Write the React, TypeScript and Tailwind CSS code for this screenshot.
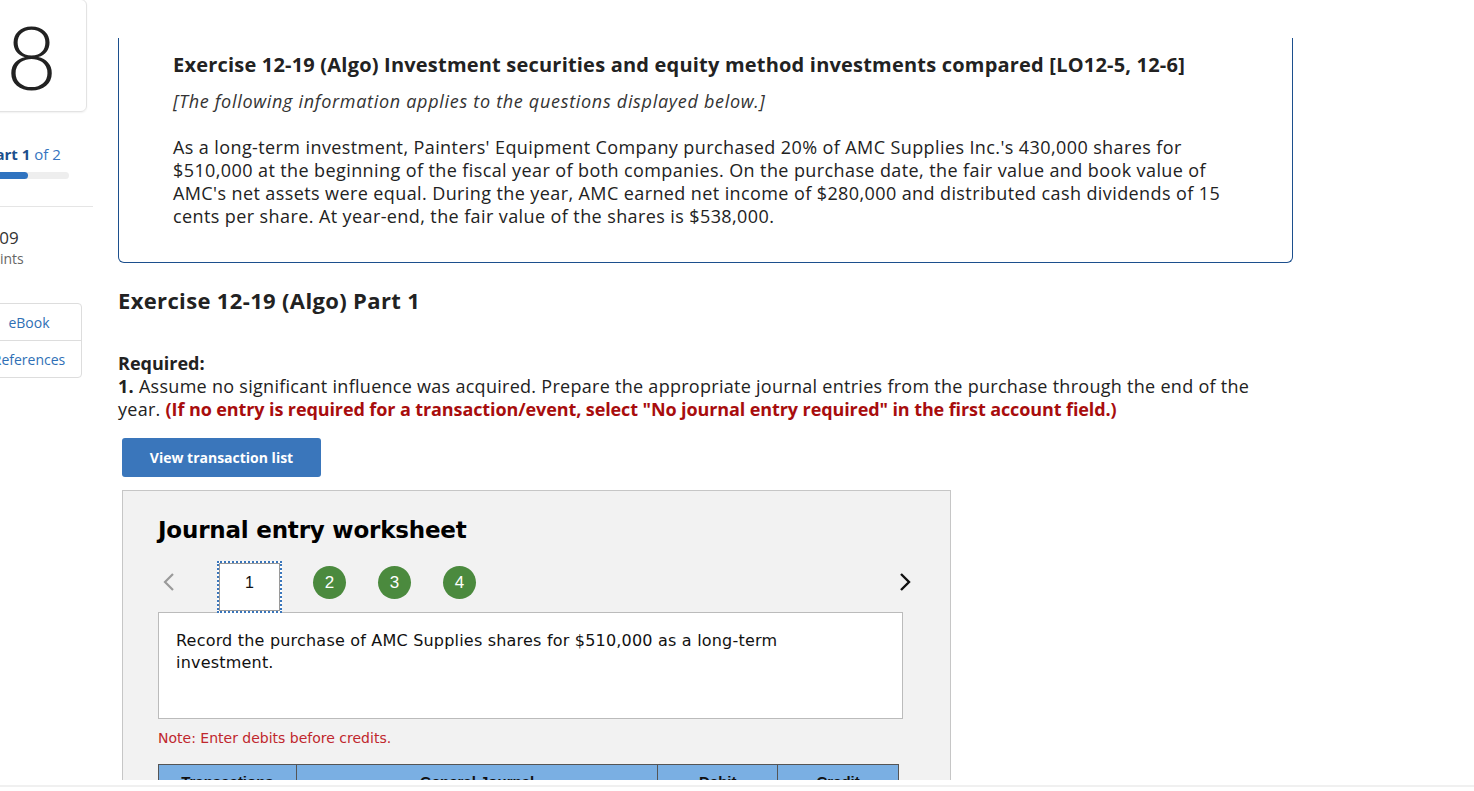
const sans = "font-['Open_Sans','Liberation_Sans',sans-serif]";
const verdana = "font-['DejaVu_Sans','Liberation_Sans',sans-serif]";

function Sidebar() {
  return (
    <aside className={`-ml-[24px] w-[142px] shrink-0 ${sans}`}>
      <div className="-mt-px flex h-[113px] w-[111px] items-center justify-center rounded-md border border-[#e3e3e3] shadow-[0_1px_2px_rgba(0,0,0,0.06)]">
        <span className="font-['Lato',sans-serif] text-[88px] font-light leading-none text-[#222]">8</span>
      </div>
      <p className="mt-[32px] pl-[10px] text-[15px] leading-[20px] text-[#3574bf]">
        <span className="font-bold text-[#1c4f8d]">Part 1</span> of 2
      </p>
      <div className="mt-[8px] h-[7px] w-[93px] rounded-full bg-[#eeeeee]">
        <div className="h-full w-[52px] rounded-full bg-[#2f73c0]" />
      </div>
      <div className="mt-[27px] w-[117px] border-t border-[#e5e5e5]" />
      <p className="mt-[20px] pl-[9px] text-[17px] leading-[22px] text-[#333]">1.09</p>
      <p className="mt-px pl-[7px] text-[14px] leading-[18px] text-[#666]">points</p>
      <div className="mt-[35px] w-[106px] rounded border border-[#dddddd] text-[14px] text-[#2f6fb5]">
        <div className="flex h-[37px] items-center justify-center border-b border-[#dddddd]">eBook</div>
        <div className="flex h-[36px] items-center justify-center">References</div>
      </div>
    </aside>
  );
}

function Pager() {
  return (
    <div className="flex h-[52px] items-start">
      <svg width="14" height="20" viewBox="0 0 14 20" className="ml-[4px] mt-[11px]">
        <path d="M11 2 L3 10 L11 18" fill="none" stroke="#9a9a9a" strokeWidth="2.2" />
      </svg>
      <div className="relative z-10 ml-[41px] flex h-[52px] w-[65px] justify-center border-2 border-dotted border-[#3a76bb] bg-white pt-[10px]">
        <div className="absolute inset-0 border border-[#9a9a9a]" />
        <span className="font-['Liberation_Sans',sans-serif] text-[16px] leading-[20px] text-[#111]">1</span>
      </div>
      {["2", "3", "4"].map((n, i) => (
        <span
          key={n}
          className={`${i === 0 ? "ml-[31px]" : "ml-[32px]"} mt-[5px] flex h-[33px] w-[33px] items-center justify-center rounded-full bg-[#4b8a3e] font-['Liberation_Sans',sans-serif] text-[17px] text-white`}
        >
          {n}
        </span>
      ))}
      <svg width="14" height="20" viewBox="0 0 14 20" className="ml-auto -mr-[9px] mt-[11px]">
        <path d="M3 2 L11 10 L3 18" fill="none" stroke="#111" strokeWidth="2.4" />
      </svg>
    </div>
  );
}

function Worksheet() {
  return (
    <section className="ml-[4px] mt-[13px] w-[829px] border border-[#c6c6c6] bg-[#f2f2f2] pl-[35px] pt-[24px] pb-[40px]">
      <h2 className={`${verdana} text-[23px] font-bold leading-[30px] tracking-[-0.2px] text-black`}>
        Journal entry worksheet
      </h2>
      <div className="mt-[16px] w-[745px]">
        <Pager />
      </div>
      <div className={`-mt-px h-[107px] w-[745px] border border-[#bbbbbb] bg-white pl-[17px] pt-[17px] ${verdana} text-[16px] leading-[22px] tracking-[0.2px] text-[#111]`}>
        Record the purchase of AMC Supplies shares for $510,000 as a long-term
        <br />
        investment.
      </div>
      <p className={`mt-[10px] ${verdana} text-[14px] leading-[18px] text-[#c0272d]`}>
        Note: Enter debits before credits.
      </p>
      <table className="mt-[17px] w-[741px] border-collapse font-['Liberation_Sans',sans-serif] text-[15px] font-bold text-[#111]">
        <thead>
          <tr className="bg-[#7aafe3]">
            <th className="w-[138px] border border-[#555] py-[6px]">Transactions</th>
            <th className="w-[362px] border border-[#555] py-[6px]">General Journal</th>
            <th className="w-[120px] border border-[#555] py-[6px]">Debit</th>
            <th className="w-[121px] border border-[#555] py-[6px]">Credit</th>
          </tr>
        </thead>
        <tbody>
          <tr className="bg-white">
            <td className="h-[36px] border border-[#999]" />
            <td className="border border-[#999]" />
            <td className="border border-[#999]" />
            <td className="border border-[#999]" />
          </tr>
        </tbody>
      </table>
    </section>
  );
}

export default function App() {
  return (
    <div className="flex h-[791px] w-full flex-col overflow-hidden bg-white">
      <div className="flex h-[780px] overflow-hidden">
        <Sidebar />
        <main className={`w-[1175px] shrink-0 ${sans} text-[#222]`}>
          <div className="mt-[38px] h-[225px] rounded-b-md border-x border-b border-[#1c4f8d] pl-[54px] pt-[14px]">
            <h1 className="text-[20px] font-bold leading-[26px] tracking-[0.2px] text-[#222]">
              Exercise 12-19 (Algo) Investment securities and equity method investments compared [LO12-5, 12-6]
            </h1>
            <p className="mt-[12px] text-[18px] italic leading-[23px] tracking-[0.7px] text-[#333]">
              [The following information applies to the questions displayed below.]
            </p>
            <p className="mt-[23px] text-[18px] leading-[23px] tracking-[0.4px] text-[#222]">
              As a long-term investment, Painters' Equipment Company purchased 20% of AMC Supplies Inc.'s 430,000 shares for
              <br />
              $510,000 at the beginning of the fiscal year of both companies. On the purchase date, the fair value and book value of
              <br />
              AMC's net assets were equal. During the year, AMC earned net income of $280,000 and distributed cash dividends of 15
              <br />
              cents per share. At year-end, the fair value of the shares is $538,000.
            </p>
          </div>
          <h2 className="mt-[23px] text-[22px] font-bold leading-[28px] tracking-[0.35px] text-[#222]">Exercise 12-19 (Algo) Part 1</h2>
          <p className="mt-[38px] text-[18px] font-bold leading-[23px]">Required:</p>
          <p className="text-[18px] leading-[23px] tracking-[0.28px]">
            <span className="font-bold">1.</span> Assume no significant influence was acquired. Prepare the appropriate journal entries from the purchase through the end of the
            <br />
            year.{" "}
            <span className="font-bold tracking-[-0.1px] text-[#a80d0d]">
              (If no entry is required for a transaction/event, select "No journal entry required" in the first account field.)
            </span>
          </p>
          <button
            type="button"
            className="ml-[4px] mt-[17px] h-[39px] w-[199px] rounded-[3px] bg-[#3a76bb] text-[14px] font-bold text-white"
          >
            View transaction list
          </button>
          <Worksheet />
        </main>
      </div>
      <div className="h-[11px] border-t-[3px] border-white bg-white">
        <div className="mt-[2px] border-t-2 border-[#f0f0f0]" />
      </div>
    </div>
  );
}
